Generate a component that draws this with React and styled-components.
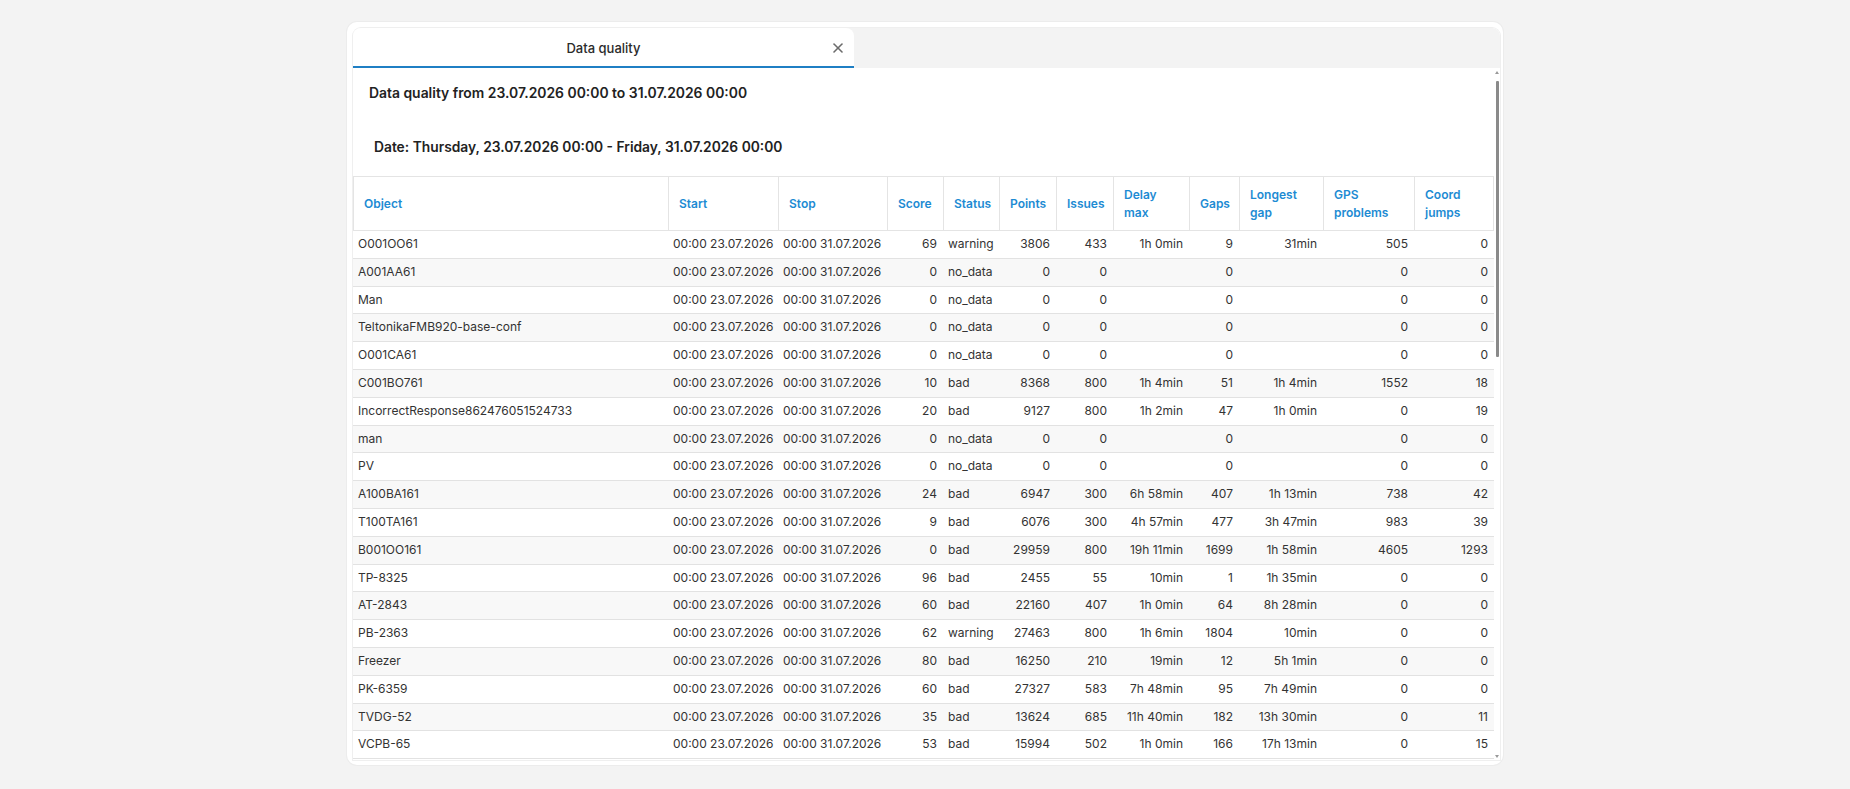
import React from 'react';
import styled, { createGlobalStyle } from 'styled-components';
import { X } from 'lucide-react';

const GlobalStyle = createGlobalStyle`
  html, body {
    margin: 0;
    padding: 0;
    background: #f3f3f3;
    font-family: Inter, "Noto Sans", "Liberation Sans", sans-serif;
    color: #333;
  }
`;

const Page = styled.div`
  display: flex;
  justify-content: center;
  padding-top: 22px;
  height: 789px;
  box-sizing: border-box;
  overflow: hidden;
`;

const Card = styled.section`
  width: 1156px;
  height: 743px;
  box-sizing: border-box;
  padding: 6px 3px 5px 6px;
  background: #fff;
  border-radius: 10px;
  box-shadow: 0 0 0 1px #ececec;
  display: flex;
`;

const Panel = styled.div`
  flex: 1;
  display: flex;
  flex-direction: column;
  border-radius: 8px 8px 0 0;
  box-shadow: 0 0 0 1px #efefef;
  overflow: hidden;
  min-width: 0;
`;

const TabBar = styled.div`
  display: flex;
  height: 40px;
  background: #f3f3f3;
  flex-shrink: 0;
`;

const Tab = styled.div`
  width: 501px;
  box-sizing: border-box;
  display: grid;
  grid-template-columns: 24px 1fr 24px;
  align-items: center;
  padding-top: 2px;
  background: #fff;
  border-radius: 0 8px 0 0;
  border-bottom: 2px solid #1f7fc4;
  font-size: 13px;
  font-weight: 500;
  color: #2b2b2b;
  text-align: center;
`;

const CloseButton = styled.span`
  display: flex;
  align-items: center;
  justify-content: flex-start;
  color: #6b6b6b;
`;

const Body = styled.div`
  position: relative;
  flex: 1;
  overflow: hidden;
  padding-right: 6px;
`;

const Heading = styled.h2`
  margin: 15px 0 0 16px;
  font-size: 13.9px;
  line-height: 20px;
  font-weight: 600;
  color: #222;
`;

const DateLine = styled.h3`
  margin: 34px 0 19px 21px;
  font-size: 13.8px;
  line-height: 20px;
  font-weight: 600;
  color: #222;
`;

const Table = styled.table`
  width: 100%;
  table-layout: fixed;
  border-collapse: separate;
  border-spacing: 0;
  font-size: 12px;
`;

const Th = styled.th`
  padding: 8.5px 12px 8.5px 10px;
  line-height: 18px;
  text-align: left;
  vertical-align: middle;
  font-weight: 600;
  color: #1d8bd3;
  border-top: 1px solid #e4e4e4;
  border-bottom: 1px solid #e4e4e4;
  border-left: 1px solid #e4e4e4;

  &:last-child {
    border-right: 1px solid #e4e4e4;
  }
`;

const Tr = styled.tr`
  background: ${p => (p.$striped ? '#f8f8f8' : '#fff')};
`;

const Td = styled.td`
  padding: 5px 6px 5px 5px;
  line-height: 16.8px;
  text-align: ${p => (p.$right ? 'right' : 'left')};
  white-space: nowrap;
  overflow: hidden;
  color: #333;
  border-bottom: 1px solid #e2e2e2;
`;

const ScrollTrack = styled.div`
  position: absolute;
  top: 3px;
  bottom: 2px;
  right: 1px;
  width: 4px;
  display: flex;
  flex-direction: column;
  align-items: center;
`;

const ScrollArrow = styled.div`
  width: 0;
  height: 0;
  border-left: 2px solid transparent;
  border-right: 2px solid transparent;
  ${p => (p.$down ? 'border-top: 3px solid #999;' : 'border-bottom: 3px solid #999;')}
  ${p => (p.$down ? 'margin-top: auto;' : '')}
`;

const ScrollThumb = styled.div`
  width: 3px;
  height: 276px;
  margin-top: 7px;
  background: #8a8a8a;
  border-radius: 1px;
`;

const columns = [
  { key: 'object', label: 'Object', width: 315 },
  { key: 'start', label: 'Start', width: 110 },
  { key: 'stop', label: 'Stop', width: 109 },
  { key: 'score', label: 'Score', width: 56, right: true },
  { key: 'status', label: 'Status', width: 56 },
  { key: 'points', label: 'Points', width: 57, right: true },
  { key: 'issues', label: 'Issues', width: 57, right: true },
  { key: 'delay', label: 'Delay max', width: 76, right: true },
  { key: 'gaps', label: 'Gaps', width: 50, right: true },
  { key: 'longest', label: 'Longest gap', width: 84, right: true },
  { key: 'gps', label: 'GPS problems', width: 91, right: true },
  { key: 'jumps', label: 'Coord jumps', width: 80, right: true },
];

const raw = [
  ['O001OO61', 69, 'warning', 3806, 433, '1h 0min', 9, '31min', 505, 0],
  ['A001AA61', 0, 'no_data', 0, 0, '', 0, '', 0, 0],
  ['Man', 0, 'no_data', 0, 0, '', 0, '', 0, 0],
  ['TeltonikaFMB920-base-conf', 0, 'no_data', 0, 0, '', 0, '', 0, 0],
  ['O001CA61', 0, 'no_data', 0, 0, '', 0, '', 0, 0],
  ['C001BO761', 10, 'bad', 8368, 800, '1h 4min', 51, '1h 4min', 1552, 18],
  ['IncorrectResponse862476051524733', 20, 'bad', 9127, 800, '1h 2min', 47, '1h 0min', 0, 19],
  ['man', 0, 'no_data', 0, 0, '', 0, '', 0, 0],
  ['PV', 0, 'no_data', 0, 0, '', 0, '', 0, 0],
  ['A100BA161', 24, 'bad', 6947, 300, '6h 58min', 407, '1h 13min', 738, 42],
  ['T100TA161', 9, 'bad', 6076, 300, '4h 57min', 477, '3h 47min', 983, 39],
  ['B001OO161', 0, 'bad', 29959, 800, '19h 11min', 1699, '1h 58min', 4605, 1293],
  ['TP-8325', 96, 'bad', 2455, 55, '10min', 1, '1h 35min', 0, 0],
  ['AT-2843', 60, 'bad', 22160, 407, '1h 0min', 64, '8h 28min', 0, 0],
  ['PB-2363', 62, 'warning', 27463, 800, '1h 6min', 1804, '10min', 0, 0],
  ['Freezer', 80, 'bad', 16250, 210, '19min', 12, '5h 1min', 0, 0],
  ['PK-6359', 60, 'bad', 27327, 583, '7h 48min', 95, '7h 49min', 0, 0],
  ['TVDG-52', 35, 'bad', 13624, 685, '11h 40min', 182, '13h 30min', 0, 11],
  ['VCPB-65', 53, 'bad', 15994, 502, '1h 0min', 166, '17h 13min', 0, 15],
];

const rows = raw.map(([object, ...rest]) => [object, '00:00 23.07.2026', '00:00 31.07.2026', ...rest]);

export default function App() {
  return (
    <>
      <GlobalStyle />
      <Page>
        <Card>
          <Panel>
            <TabBar>
              <Tab>
                <span />
                <span>Data quality</span>
                <CloseButton>
                  <X size={16} strokeWidth={2.4} />
                </CloseButton>
              </Tab>
            </TabBar>
            <Body>
              <Heading>Data quality from 23.07.2026 00:00 to 31.07.2026 00:00</Heading>
              <DateLine>Date: Thursday, 23.07.2026 00:00 - Friday, 31.07.2026 00:00</DateLine>
              <Table>
                <colgroup>
                  {columns.map(c => (
                    <col key={c.key} style={{ width: c.width }} />
                  ))}
                </colgroup>
                <thead>
                  <tr>
                    {columns.map(c => (
                      <Th key={c.key}>{c.label}</Th>
                    ))}
                  </tr>
                </thead>
                <tbody>
                  {rows.map((row, i) => (
                    <Tr key={i} $striped={i % 2 === 1}>
                      {row.map((cell, j) => (
                        <Td key={j} $right={columns[j].right}>{cell}</Td>
                      ))}
                    </Tr>
                  ))}
                </tbody>
              </Table>
              <ScrollTrack>
                <ScrollArrow />
                <ScrollThumb />
                <ScrollArrow $down />
              </ScrollTrack>
            </Body>
          </Panel>
        </Card>
      </Page>
    </>
  );
}
